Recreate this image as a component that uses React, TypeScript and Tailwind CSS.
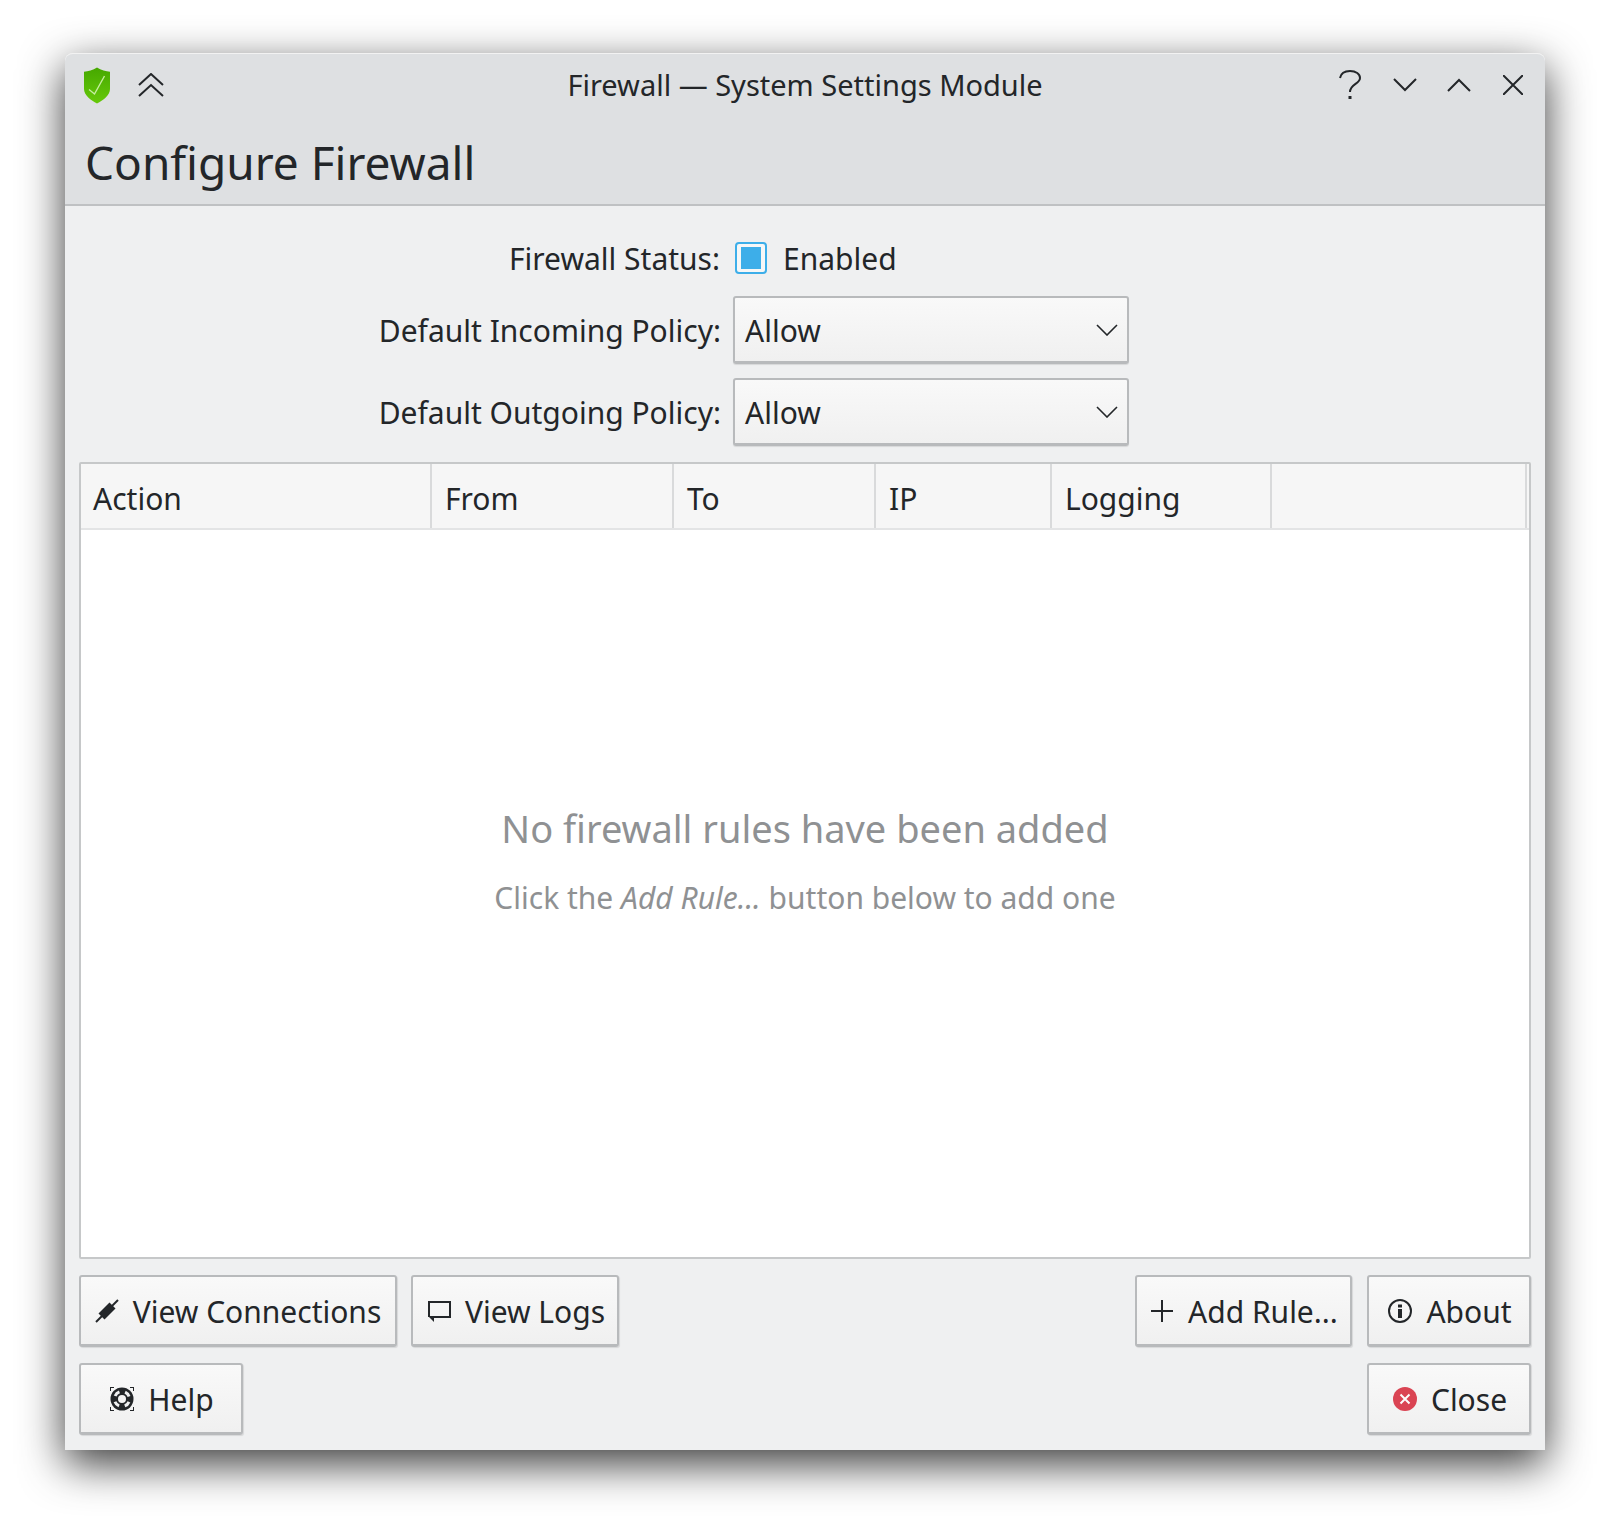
const font = "font-['Noto_Sans',sans-serif]";

function Shield() {
  return (
    <svg width="28" height="37" viewBox="0 0 28 37">
      <defs>
        <linearGradient id="shieldFill" x1="0" y1="0" x2="0" y2="1">
          <stop offset="0" stopColor="#46a800" />
          <stop offset="1" stopColor="#66c90a" />
        </linearGradient>
      </defs>
      <path d="M14 0.5 C10 3 5 4.3 1 4.8 V22 C1 28 8 33.5 14 36.5 C20 33.5 27 28 27 22 V4.8 C23 4.3 18 3 14 0.5 Z" fill="url(#shieldFill)" />
      <path d="M6 22.5 L11.5 27 L21.5 9" fill="none" stroke="#c6eda0" strokeWidth="1.4" />
    </svg>
  );
}

function Plug() {
  return (
    <svg width="24" height="24" viewBox="0 0 24 24" fill="#232629">
      <path d="M1 23 L23 1" stroke="#232629" strokeWidth="2" />
      <path d="M3.5 14.5 L14.5 3.5 L20.5 9.5 L9.5 20.5 Z" />
    </svg>
  );
}

function Comment() {
  return (
    <svg width="24" height="24" viewBox="0 0 24 24" fill="none">
      <path d="M2 18 V3 H23 V18 H7" stroke="#232629" strokeWidth="2" />
      <path d="M1 17 H7 L7 23 Z" fill="#232629" />
    </svg>
  );
}

function Lifebuoy() {
  return (
    <svg width="24" height="24" viewBox="0 0 24 24">
      <path d="M0 0 H4 M0 0 V4 M24 0 H20 M24 0 V4 M0 24 H4 M0 24 V20 M24 24 H20 M24 24 V20" stroke="#232629" strokeWidth="2" />
      <circle cx="12" cy="12" r="11.5" fill="#232629" />
      <circle cx="12" cy="12" r="7.5" fill="none" stroke="#eff0f1" strokeWidth="3" strokeDasharray="6 5.8" strokeDashoffset="-2.9" />
      <circle cx="12" cy="12" r="4" fill="#f4f4f4" />
    </svg>
  );
}

function Plus() {
  return (
    <svg width="24" height="24" viewBox="0 0 24 24" stroke="#232629" strokeWidth="2">
      <path d="M12 1 V23 M1 12 H23" />
    </svg>
  );
}

function Info() {
  return (
    <svg width="24" height="24" viewBox="0 0 24 24">
      <circle cx="12" cy="12" r="11" fill="none" stroke="#232629" strokeWidth="2" />
      <rect x="10" y="10" width="4" height="9" fill="#232629" />
      <rect x="10" y="5.5" width="4" height="3" fill="#232629" />
    </svg>
  );
}

function CloseIcon() {
  return (
    <svg width="24" height="24" viewBox="0 0 24 24">
      <circle cx="12" cy="12" r="12" fill="#da4453" />
      <path d="M7.5 7.5 L16.5 16.5 M16.5 7.5 L7.5 16.5" stroke="#fcfcfc" strokeWidth="2" />
    </svg>
  );
}

function Chevron() {
  return (
    <svg width="22" height="12" viewBox="0 0 22 12" fill="none" stroke="#232629" strokeWidth="1.6">
      <path d="M1 1 L11 11 L21 1" />
    </svg>
  );
}

function Combo() {
  return (
    <div className="flex h-[68px] w-[396px] items-center justify-between rounded-[3px] border-2 border-[#b8babc] border-b-[3px] bg-gradient-to-b from-[#f9f9f9] to-[#f0f0f0] pl-[10px] pr-[9px] shadow-[0_1px_1px_rgba(0,0,0,0.1)]">
      <span className="pt-[2px]">Allow</span>
      <Chevron />
    </div>
  );
}

function Btn({ icon, label, className }: { icon: React.ReactNode; label: string; className: string }) {
  return (
    <button className={`flex h-[72px] items-center justify-center gap-[14px] rounded-[3px] border-2 border-[#b8babc] border-b-[3px] bg-gradient-to-b from-[#f9f9f9] to-[#f0f0f0] shadow-[1px_1px_1px_rgba(0,0,0,0.1)] ${className}`}>
      {icon}
      <span className="pt-[3px]">{label}</span>
    </button>
  );
}

const columns = [
  { label: "Action", w: "w-[351px] pl-[12px]" },
  { label: "From", w: "w-[242px] pl-[13px]" },
  { label: "To", w: "w-[202px] pl-[13px]" },
  { label: "IP", w: "w-[176px] pl-[13px]" },
  { label: "Logging", w: "w-[220px] pl-[13px]" },
];

export default function App() {
  return (
    <div className={`h-[1527px] w-[1610px] overflow-hidden bg-white pl-[65px] pt-[53px] text-[30px] leading-none text-[#232629] ${font}`}>
      <div className="flex h-[1397px] w-[1480px] flex-col rounded-t-[8px] bg-[#eff0f1] shadow-[0_14px_44px_rgba(0,0,0,0.78)]">
        {/* title bar + page header */}
        <header className="h-[153px] shrink-0 rounded-t-[8px] border-b-2 border-[#bfc1c3] bg-[#dee0e2] border-t border-t-[#f2f2f2]">
          <div className="grid h-[62px] grid-cols-[1fr_auto_1fr] items-center pl-[18px] pr-[22px]">
            <div className="flex items-center">
              <Shield />
              <svg className="ml-[27px]" width="26" height="24" viewBox="0 0 26 24" fill="none" stroke="#232629" strokeWidth="2">
                <path d="M1 12 L13 1 L25 12 M1 23 L13 12 L25 23" />
              </svg>
            </div>
            <div className="pb-[2px] pl-[4px] text-center text-[29px]">Firewall — System Settings Module</div>
            <div className="flex items-center justify-end">
              <svg width="22" height="30" viewBox="0 0 22 30" fill="none" stroke="#232629" strokeWidth="2">
                <path d="M1 8 C2 3 6 1 11 1 C17 1 21 4 21 8 C21 14 11 14 11 22" />
                <rect x="9.5" y="26" width="3" height="3" fill="#232629" stroke="none" />
              </svg>
              <svg className="ml-[32px]" width="24" height="14" viewBox="0 0 24 14" fill="none" stroke="#232629" strokeWidth="2"><path d="M1 1 L12 12 L23 1" /></svg>
              <svg className="ml-[30px]" width="24" height="14" viewBox="0 0 24 14" fill="none" stroke="#232629" strokeWidth="2"><path d="M1 13 L12 2 L23 13" /></svg>
              <svg className="ml-[32px]" width="20" height="20" viewBox="0 0 20 20" fill="none" stroke="#232629" strokeWidth="2"><path d="M0 0 L20 20 M20 0 L0 20" /></svg>
            </div>
          </div>
          <h1 className="pl-[20px] pt-[15px] text-[46px] font-normal leading-[62px]">Configure Firewall</h1>
        </header>

        <div className="flex flex-1 flex-col px-[14px] pt-[35px]">
          {/* policy form */}
          <div className="grid grid-cols-[642px_396px] items-center gap-x-[12px]">
            <label className="pr-[1px] pt-[3px] text-right">Firewall Status:</label>
            <div className="flex h-[30px] items-center gap-[16px]">
              <div className="ml-[2px] flex h-[32px] w-[32px] items-center justify-center rounded-[4px] border-2 border-[#3daee9] bg-[#f6f7f7]">
                <div className="h-[22px] w-[20px] bg-[#3daee9]" />
              </div>
              <span className="pt-[3px]">Enabled</span>
            </div>
            <label className="mt-[22px] pt-[2px] text-right">Default Incoming Policy:</label>
            <div className="mt-[22px]"><Combo /></div>
            <label className="mt-[14px] pt-[2px] text-right">Default Outgoing Policy:</label>
            <div className="mt-[14px]"><Combo /></div>
          </div>

          {/* rules table */}
          <div className="mt-[16px] flex h-[797px] flex-col rounded-[2px] border-2 border-[#c6c8c9] bg-white">
            <div className="flex h-[66px] shrink-0 border-b-2 border-[#e3e4e5] bg-[#f6f6f6] pr-[2px]">
              {columns.map((c) => (
                <div key={c.label} className={`flex items-center border-r-2 border-[#d9dadb] pt-[6px] ${c.w}`}>{c.label}</div>
              ))}
              <div className="flex-1 border-r-2 border-[#d9dadb]" />
            </div>
            <div className="flex flex-1 flex-col items-center pt-[274px] text-[#8f9193]">
              <div className="text-[38px] leading-[48px]">No firewall rules have been added</div>
              <div className="mt-[26px] leading-[40px]">Click the <em>Add Rule...</em> button below to add one</div>
            </div>
          </div>

          {/* action buttons */}
          <div className="mt-[16px] flex justify-between">
            <div className="flex gap-[14px]">
              <Btn icon={<Plug />} label="View Connections" className="w-[318px]" />
              <Btn icon={<Comment />} label="View Logs" className="w-[208px] pl-[2px]" />
            </div>
            <div className="flex gap-[15px]">
              <Btn icon={<Plus />} label="Add Rule..." className="w-[217px] pl-[1px]" />
              <Btn icon={<Info />} label="About" className="w-[164px] pl-[2px]" />
            </div>
          </div>
          <div className="mt-[16px] flex justify-between">
            <Btn icon={<Lifebuoy />} label="Help" className="w-[164px] pl-[2px]" />
            <Btn icon={<CloseIcon />} label="Close" className="w-[164px] pl-[2px]" />
          </div>
        </div>
      </div>
    </div>
  );
}
